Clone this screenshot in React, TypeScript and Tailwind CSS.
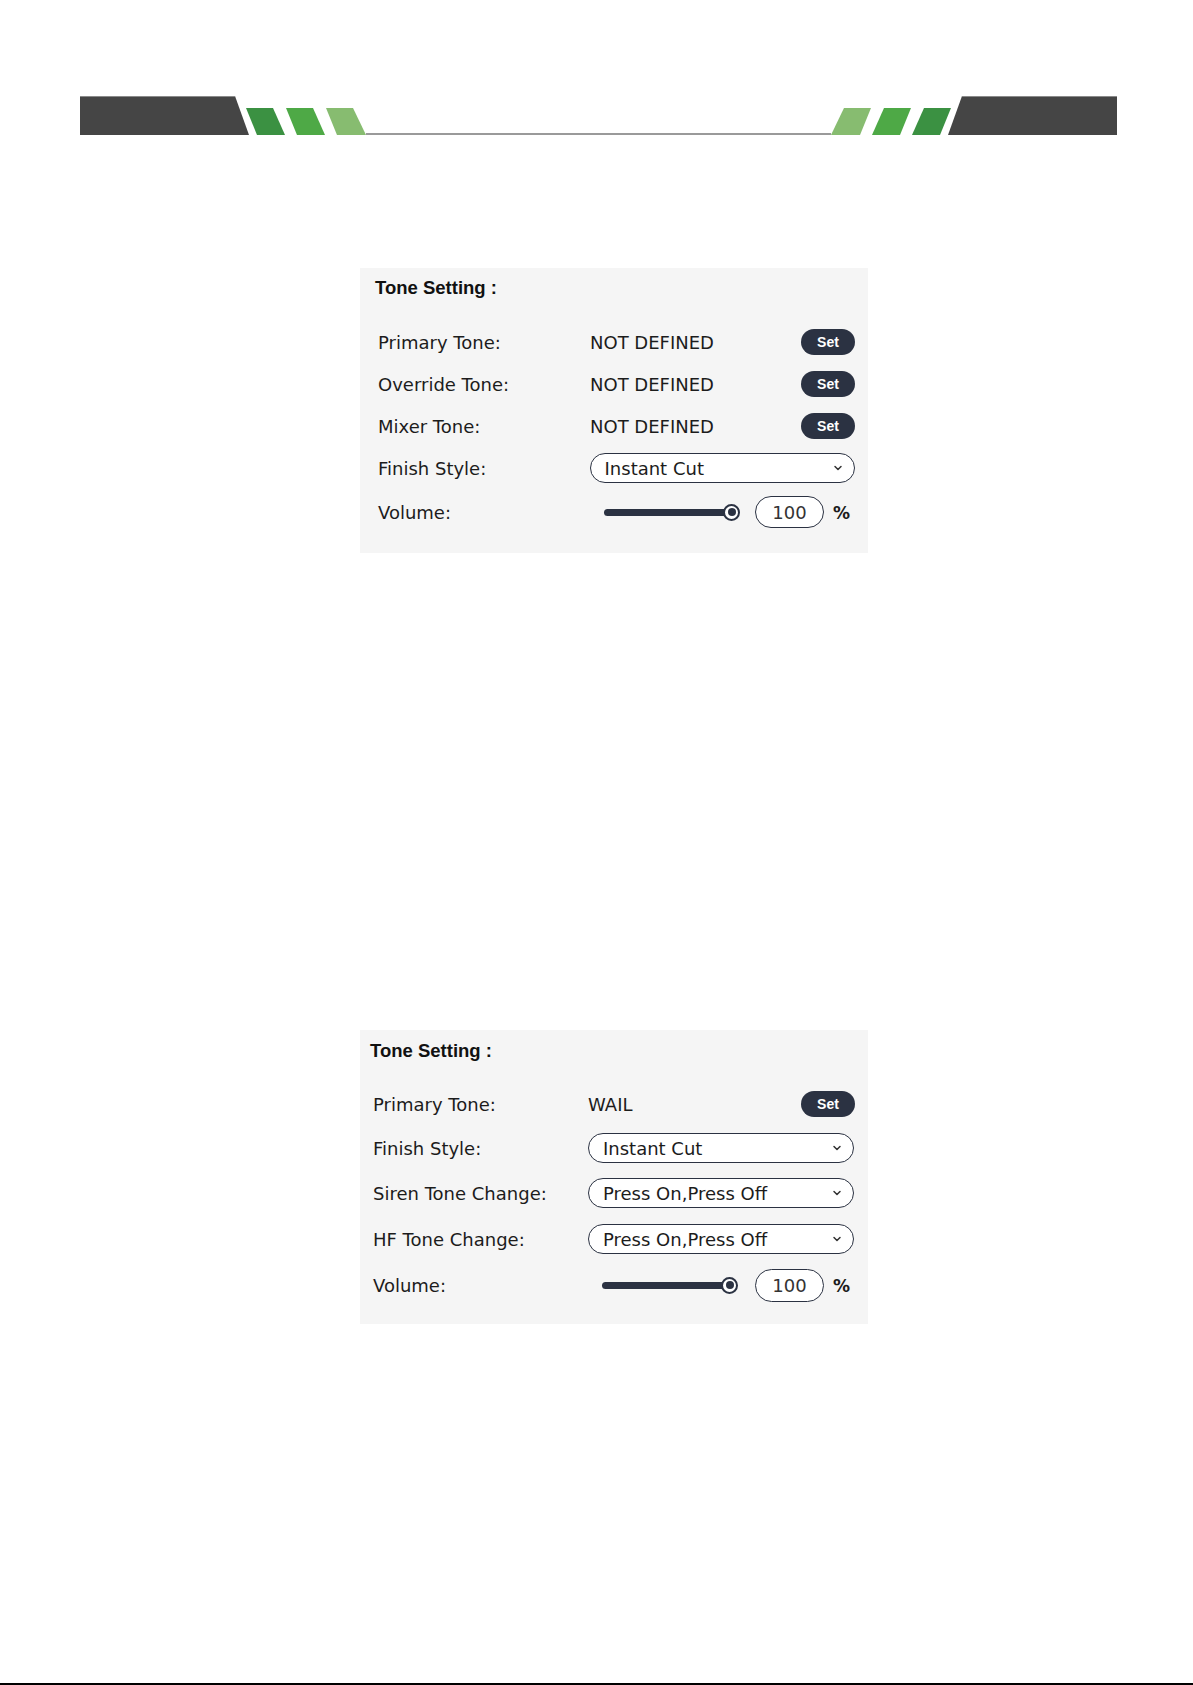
import { ChevronDown } from 'lucide-react'

const font = { fontFamily: '"DejaVu Sans", "Liberation Sans", sans-serif' }
const titleFont = { fontFamily: '"Liberation Sans", Arial, sans-serif' }

function Banner() {
  // decorative header strip, left half mirrored on the right (x' = 1197 - x)
  const greens = [
    { fill: '#3b9142', pts: [246, 273, 285, 257] },
    { fill: '#4ea946', pts: [286, 313, 325, 297] },
    { fill: '#87bc70', pts: [326, 353, 366, 337] },
  ]
  const poly = (a: number, b: number, c: number, d: number, m: boolean) => {
    const f = (x: number) => (m ? 1197 - x : x)
    return `${f(a)},12 ${f(b)},12 ${f(c)},39 ${f(d)},39`
  }
  return (
    <svg width="1193" height="40" viewBox="0 0 1193 40" className="block">
      <line x1="366" y1="38" x2="831" y2="38" stroke="#9a9a9a" strokeWidth="2" />
      <polygon points="80,0 235,0 249,39 80,39" fill="#454545" />
      <line x1="80" y1="0.5" x2="235" y2="0.5" stroke="#8a8a8a" strokeWidth="1" />
      <polygon points="1117,0 962,0 948,39 1117,39" fill="#454545" />
      <line x1="962" y1="0.5" x2="1117" y2="0.5" stroke="#8a8a8a" strokeWidth="1" />
      {greens.map((g, i) => (
        <g key={i}>
          <polygon points={poly(g.pts[0], g.pts[1], g.pts[2], g.pts[3], false)} fill={g.fill} />
          <polygon points={poly(g.pts[0], g.pts[1], g.pts[2], g.pts[3], true)} fill={g.fill} />
        </g>
      ))}
    </svg>
  )
}

function SetButton() {
  return (
    <button
      className="w-[54px] h-[26px] rounded-full bg-[#2b3242] text-white text-[14px] font-bold leading-none"
      style={titleFont}
    >
      Set
    </button>
  )
}

function Select({ value }: { value: string }) {
  return (
    <div className="w-[266px] h-[30px] rounded-full border-[1.5px] border-[#2b3242] bg-white flex items-center justify-between pl-[14px] pr-[10px]">
      <span className="text-[18px] text-[#1c1c1c]">{value}</span>
      <ChevronDown size={12} strokeWidth={3} className="text-[#333]" />
    </div>
  )
}

function Volume({ inputGap, inputH }: { inputGap: string; inputH: string }) {
  return (
    <div className="flex items-center ml-[14px]">
      <div className="flex items-center">
        <div className="w-[128px] h-[7px] rounded-full bg-[#2b3242]" />
        <div className="w-[17px] h-[17px] -ml-[9px] rounded-full border-2 border-[#2b3242] bg-white flex items-center justify-center">
          <div className="w-[8px] h-[8px] rounded-full bg-[#2b3242]" />
        </div>
      </div>
      <div className={`${inputGap} w-[69px] ${inputH} rounded-full border-[1.5px] border-[#2b3242] bg-white flex items-center justify-center text-[18px] text-[#333]`}>
        100
      </div>
      <span className="ml-[9px] mt-[4px] text-[17px] font-bold text-[#1c1c1c]">%</span>
    </div>
  )
}

export default function App() {
  return (
    <div className="w-[1193px] h-[1685px] bg-white flex flex-col" style={font}>
      <div className="mt-[96px]">
        <Banner />
      </div>

      {/* first panel */}
      <section className="mt-[132px] ml-[360px] w-[508px] h-[285px] bg-[#f5f5f5] pt-[8px] pl-[15px] pr-[13px]">
        <h2 className="text-[18.5px] leading-[24px] font-bold text-[#111]" style={titleFont}>Tone Setting :</h2>
        <div className="mt-[21px] pl-[3px] text-[18px] text-[#1c1c1c]">
          {['Primary Tone:', 'Override Tone:', 'Mixer Tone:'].map((l) => (
            <div key={l} className="h-[42px] flex items-center">
              <span className="w-[212px]">{l}</span>
              <span className="flex-1">NOT DEFINED</span>
              <SetButton />
            </div>
          ))}
          <div className="h-[42px] flex items-center">
            <span className="w-[212px]">Finish Style:</span>
            <Select value="Instant Cut" />
          </div>
          <div className="h-[42px] mt-[2px] flex items-center">
            <span className="w-[212px]">Volume:</span>
            <Volume inputGap="ml-[15px]" inputH="h-[32px]" />
          </div>
        </div>
      </section>

      {/* second panel */}
      <section className="mt-[477px] ml-[360px] w-[508px] h-[294px] bg-[#f5f5f5] pt-[9px] pl-[10px] pr-[13px]">
        <h2 className="text-[18.5px] leading-[24px] font-bold text-[#111]" style={titleFont}>Tone Setting :</h2>
        <div className="mt-[19px] pl-[3px] text-[18px] text-[#1c1c1c]">
          <div className="h-[44px] flex items-center">
            <span className="w-[215px]">Primary Tone:</span>
            <span className="flex-1">WAIL</span>
            <SetButton />
          </div>
          <div className="h-[44px] flex items-center">
            <span className="w-[215px]">Finish Style:</span>
            <Select value="Instant Cut" />
          </div>
          <div className="h-[46px] flex items-center">
            <span className="w-[215px]">Siren Tone Change:</span>
            <Select value="Press On,Press Off" />
          </div>
          <div className="h-[46px] flex items-center">
            <span className="w-[215px]">HF Tone Change:</span>
            <Select value="Press On,Press Off" />
          </div>
          <div className="h-[46px] flex items-center">
            <span className="w-[215px]">Volume:</span>
            <Volume inputGap="ml-[17px]" inputH="h-[33px]" />
          </div>
        </div>
      </section>

      <div className="flex-1" />
      <div className="h-[2px] bg-black" />
    </div>
  )
}
